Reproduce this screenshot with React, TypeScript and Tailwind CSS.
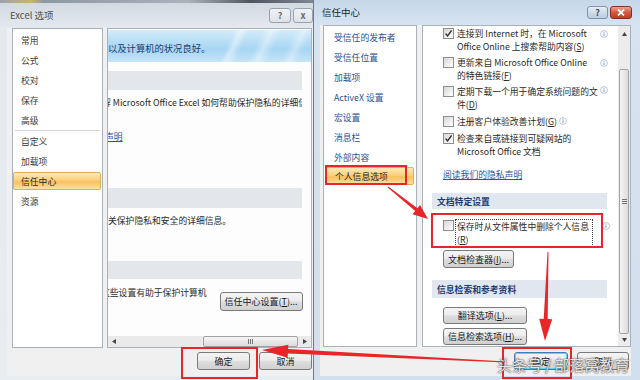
import React from "react";

const font = "font-['Noto_Sans_CJK_SC','Noto_Sans',sans-serif]";

function Check({ checked }: { checked?: boolean }) {
  return (
    <span className="mt-[1px] flex h-[11px] w-[11px] shrink-0 items-center justify-center border border-[#8f8f8f] bg-[linear-gradient(135deg,#d6d6d6,#ffffff)]">
      {checked && (
        <svg width="9" height="9" viewBox="0 0 9 9">
          <path d="M1.6 4.6 L3.6 6.9 L7.6 1.4" stroke="#2b2b2b" strokeWidth="1.4" fill="none" />
        </svg>
      )}
    </span>
  );
}

function Info({ className = "" }: { className?: string }) {
  return (
    <svg className={className} width="8" height="8" viewBox="0 0 10 10">
      <circle cx="5" cy="5" r="4.3" fill="#ffffff" stroke="#9fb1c9" strokeWidth="0.9" />
      <rect x="4.4" y="4.3" width="1.2" height="3.3" fill="#7c93b6" />
      <rect x="4.4" y="2.2" width="1.2" height="1.2" fill="#7c93b6" />
    </svg>
  );
}

function Btn({
  className = "",
  children,
  focused,
}: {
  className?: string;
  children: React.ReactNode;
  focused?: boolean;
}) {
  const border = focused
    ? "border-[#3c7fb1] shadow-[inset_0_0_0_1px_#5fd4f4]"
    : "border-[#7a7a7a]";
  return (
    <div
      className={`flex shrink-0 items-center justify-center rounded-[3px] border ${border} bg-[linear-gradient(#f4f4f4_0%,#ececec_45%,#dedede_52%,#d0d0d0_100%)] text-[9px] leading-none text-[#1a1a1a] ${className}`}
    >
      {children}
    </div>
  );
}

function arrowPts(
  tx: number,
  ty: number,
  hx: number,
  hy: number,
  tailW: number,
  shaftW: number,
  headLen: number,
  headW: number
) {
  const dx = hx - tx;
  const dy = hy - ty;
  const L = Math.hypot(dx, dy);
  const ux = dx / L;
  const uy = dy / L;
  const nx = -uy;
  const ny = ux;
  const bx = hx - ux * headLen;
  const by = hy - uy * headLen;
  const p = [
    [tx + (nx * tailW) / 2, ty + (ny * tailW) / 2],
    [bx + (nx * shaftW) / 2, by + (ny * shaftW) / 2],
    [bx + (nx * headW) / 2, by + (ny * headW) / 2],
    [hx, hy],
    [bx - (nx * headW) / 2, by - (ny * headW) / 2],
    [bx - (nx * shaftW) / 2, by - (ny * shaftW) / 2],
    [tx - (nx * tailW) / 2, ty - (ny * tailW) / 2],
  ];
  return p.map((q) => q.map((v) => v.toFixed(1)).join(",")).join(" ");
}

function LeftWindow() {
  const items1 = ["常用", "公式", "校对", "保存", "高级"];
  const items2 = ["自定义", "加载项", "信任中心", "资源"];
  return (
    <div className="flex h-[380px] w-[314px] shrink-0 flex-col border-r border-[#6f7a87] bg-[linear-gradient(#cfd7e0,#e4e9ef_28px,#e8edf2)]">
      <div className="h-[3px] shrink-0 bg-[linear-gradient(90deg,#9aa3ad,#c9b26a_10%,#8e98a3_14%,#aab3bc_60%,#4e5660_80%,#7d8792)]" />
      <div className="flex h-[25px] shrink-0 items-center pl-[10px]">
        <span className="text-[9.5px] text-[#505050]">Excel 选项</span>
        <div className="ml-auto flex gap-[2px]">
          <div className="flex h-[15px] w-[22px] items-center justify-center rounded-[3px] border border-[#98a3af] bg-[linear-gradient(#f1f3f6,#dde2e8)] text-[9px] font-bold text-[#6a6a6a]">
            ?
          </div>
          <div className="flex h-[15px] w-[20px] items-center justify-center rounded-[3px] border border-[#98a3af] bg-[linear-gradient(#f1f3f6,#dde2e8)] text-[9px] font-bold text-[#6a6a6a]">
            x
          </div>
        </div>
      </div>
      <div className="mb-[4px] ml-[7px] flex flex-1 flex-col bg-[#f0f0f0] pl-[5px] text-[8.8px] leading-[13px]">
        <div className="flex h-[320px] gap-[4px]">
          <div className="flex h-[320px] w-[91px] shrink-0 flex-col border border-[#a9b1bb] bg-white pt-[1px]">
            {items1.map((t) => (
              <div key={t} className="flex h-[20px] items-center pl-[8px] text-[#3a3a3a]">
                {t}
              </div>
            ))}
            <div className="mx-[2px] h-px bg-[#d6d6d6]" />
            {items2.map((t) =>
              t === "信任中心" ? (
                <div key={t} className="flex h-[20px] items-start">
                  <div className="mt-[1px] flex h-[18px] w-[88px] items-center rounded-[2px] border border-[#e0ae55] bg-[linear-gradient(#fdeab8,#fbd07a_45%,#f9c15d_55%,#fde2a0)] pl-[7px] text-[#2a2a2a]">
                    {t}
                  </div>
                </div>
              ) : (
                <div key={t} className="flex h-[20px] items-center pl-[8px] text-[#3a3a3a]">
                  {t}
                </div>
              )
            )}
          </div>
          <div className="flex h-[320px] w-[205px] shrink-0 flex-col border border-[#a9b1bb] bg-[#fdfdfd]">
            <div className="flex flex-1 flex-col overflow-hidden">
              <div className="mt-[1px] flex h-[32px] shrink-0 items-center bg-[linear-gradient(115deg,transparent_58%,rgba(255,255,255,0.45)_61%,transparent_65%,transparent_71%,rgba(255,255,255,0.4)_75%,transparent_80%,transparent_86%,rgba(255,255,255,0.35)_90%,transparent_94%),linear-gradient(180deg,#d3ebfa,#a6d5f2_60%,#c6e4f7)] pt-[4px]">
                <span className="whitespace-nowrap text-[9.3px] text-[#1d3d70]">以及计算机的状况良好。</span>
              </div>
              <div className="mt-[9px] h-[19px] w-[194px] shrink-0 bg-[#e3e7ec]" />
              <div className="mt-[6px] w-[194px] overflow-hidden whitespace-nowrap text-[#2a2a2a]">
                <span className="-ml-[6px] inline-block">解 Microsoft Office Excel 如何帮助保护隐私的详细信息</span>
              </div>
              <div className="mt-[21px] whitespace-nowrap">
                <span className="-ml-[3px] inline-block text-[#2b54a6] underline">声明</span>
              </div>
              <div className="mt-[45px] h-[20px] w-[194px] shrink-0 bg-[#e3e7ec]" />
              <div className="mt-[6px] whitespace-nowrap text-[#2a2a2a]">关保护隐私和安全的详细信息。</div>
              <div className="mt-[34px] h-[18px] w-[194px] shrink-0 bg-[#e3e7ec]" />
              <div className="mt-[7px] flex items-start">
                <span className="-ml-[7px] whitespace-nowrap text-[#2a2a2a]">这些设置有助于保护计算机</span>
                <Btn className="ml-[13px] mt-[6px] h-[19px] w-[83px]">
                  信任中心设置(<u>T</u>)...
                </Btn>
              </div>
            </div>
            <div className="flex h-[11px] shrink-0 bg-[#eaeaea]">
              <div className="flex w-[12px] items-center justify-center">
                <svg width="4" height="5" viewBox="0 0 4 5">
                  <path d="M4 0 L0 2.5 L4 5 Z" fill="#444" />
                </svg>
              </div>
              <div className="flex flex-1 justify-end pr-[1px]">
                <div className="flex h-[11px] w-[95px] items-center justify-center rounded-[2px] border border-[#a2a2a2] bg-[linear-gradient(#f5f5f5,#dcdcdc)]">
                  <svg width="6" height="5" viewBox="0 0 6 5">
                    <path d="M0.5 0 V5 M2.5 0 V5 M4.5 0 V5" stroke="#555" strokeWidth="0.8" />
                  </svg>
                </div>
              </div>
              <div className="flex w-[12px] items-center justify-center">
                <svg width="4" height="5" viewBox="0 0 4 5">
                  <path d="M0 0 L4 2.5 L0 5 Z" fill="#444" />
                </svg>
              </div>
            </div>
          </div>
        </div>
        <div className="mt-[4px] flex justify-end gap-[9px] pr-[1px]">
          <Btn className="h-[18px] w-[53px]">确定</Btn>
          <Btn className="h-[18px] w-[53px]">取消</Btn>
        </div>
      </div>
    </div>
  );
}

function RightWindow() {
  const nav = ["受信任的发布者", "受信任位置", "加载项", "ActiveX 设置", "宏设置", "消息栏", "外部内容"];
  return (
    <div className="flex h-[380px] flex-1 flex-col bg-[linear-gradient(#c6d7ea,#d6e3f1_25px,#d1dfee)]">
      <div className="flex h-[25px] shrink-0 items-center pl-[8px] pr-[8px]">
        <span className="text-[9.5px] text-[#1e1e1e]">信任中心</span>
        <div className="ml-auto flex gap-[2px]">
          <div className="flex h-[13px] w-[21px] items-center justify-center rounded-[3px] border border-[#7f93ab] bg-[linear-gradient(#e6eef7,#b9cbe0)] text-[9px] font-bold text-[#3d4e66]">
            ?
          </div>
          <div className="flex h-[13px] w-[22px] items-center justify-center rounded-[3px] border border-[#8a2e22] bg-[linear-gradient(#e9a48f,#d35a40_50%,#c23b22)]">
            <svg width="8" height="7" viewBox="0 0 8 7">
              <path d="M1 0.5 L7 6.5 M7 0.5 L1 6.5" stroke="#ffffff" strokeWidth="1.8" />
            </svg>
          </div>
        </div>
      </div>
      <div className="mb-[4px] ml-[6px] mr-[9px] flex flex-1 flex-col bg-[#f0f0f0] pl-[3px] text-[8.8px] leading-[13px]">
        <div className="flex h-[322px] gap-[5px]">
          <div className="flex h-[322px] w-[94px] shrink-0 flex-col border border-[#a9b1bb] bg-white pt-[1px]">
            {nav.map((t) => (
              <div key={t} className="flex h-[20px] items-center whitespace-nowrap pl-[10px] text-[#2c4f94]">
                {t}
              </div>
            ))}
            <div className="flex h-[20px] items-start">
              <div className="ml-[1px] flex h-[18px] w-[89px] items-center rounded-[2px] border border-[#e0ae55] bg-[linear-gradient(#fdeab8,#fbd07a_45%,#f9c15d_55%,#fde2a0)] pl-[9px] text-[#2a2a2a]">
                个人信息选项
              </div>
            </div>
          </div>
          <div className="flex h-[322px] w-[209px] shrink-0 border border-[#a9b1bb] bg-white">
            <div className="flex flex-1 flex-col overflow-hidden pl-[20px] pt-[1px] text-[#2a2a2a]">
              <div className="flex items-start">
                <Check checked />
                <div className="ml-[3px] w-[141px] whitespace-nowrap">
                  连接到 Internet 时，在 Microsoft
                  <br />
                  Office Online 上搜索帮助内容(<u>S</u>)
                </div>
                <Info className="ml-[2px] mt-[3px] shrink-0" />
              </div>
              <div className="mt-[3px] flex items-start">
                <Check />
                <div className="ml-[3px] w-[141px] whitespace-nowrap">
                  更新来自 Microsoft Office Online
                  <br />
                  的特色链接(<u>F</u>)
                </div>
                <Info className="ml-[2px] mt-[3px] shrink-0" />
              </div>
              <div className="mt-[3px] flex items-start">
                <Check />
                <div className="ml-[3px] w-[141px] whitespace-nowrap">
                  定期下载一个用于确定系统问题的文
                  <br />
                  件(<u>D</u>)
                </div>
                <Info className="ml-[2px] mt-[1px] shrink-0" />
              </div>
              <div className="mt-[4px] flex items-start">
                <Check />
                <div className="ml-[3px] whitespace-nowrap">
                  注册客户体验改善计划(<u>G</u>)
                </div>
                <Info className="ml-[2px] mt-[2px] shrink-0" />
              </div>
              <div className="mt-[4px] flex items-start">
                <Check checked />
                <div className="ml-[3px] whitespace-nowrap">
                  检查来自或链接到可疑网站的
                  <br />
                  Microsoft Office 文档
                </div>
              </div>
              <div className="mt-[10px] whitespace-nowrap text-[#2b54a6] underline">阅读我们的隐私声明</div>
              <div className="-ml-[11px] mt-[12px] flex h-[16px] w-[175px] shrink-0 items-center bg-[#e1e7ef] pl-[5px] font-bold text-[#1e3c72]">
                文档特定设置
              </div>
              <div className="mt-[10px] flex items-start">
                <Check />
                <div className="ml-[1px] w-[138px] whitespace-nowrap border border-dotted border-[#444] pl-[1px]">
                  保存时从文件属性中删除个人信息
                  <br />
                  (<u>R</u>)
                </div>
                <Info className="ml-[9px] mt-[3px] shrink-0" />
              </div>
              <Btn className="mt-[3px] h-[18px] w-[71px]">
                文档检查器(<u>I</u>)...
              </Btn>
              <div className="-ml-[11px] mt-[12px] flex h-[18px] w-[175px] shrink-0 items-center bg-[#e1e7ef] pl-[5px] font-bold text-[#1e3c72]">
                信息检索和参考资料
              </div>
              <Btn className="mt-[9px] h-[17px] w-[84px]">
                翻译选项(<u>L</u>)...
              </Btn>
              <Btn className="mt-[4px] h-[17px] w-[84px]">
                信息检索选项(<u>H</u>)...
              </Btn>
            </div>
            <div className="flex w-[12px] shrink-0 flex-col bg-[#ececec]">
              <div className="flex h-[15px] items-center justify-center">
                <svg width="5" height="4" viewBox="0 0 5 4">
                  <path d="M0 4 L2.5 0 L5 4 Z" fill="#444" />
                </svg>
              </div>
              <div className="h-[28px]" />
              <div className="mx-[1px] flex h-[265px] items-center justify-center rounded-[2px] border border-[#a2a2a2] bg-[linear-gradient(90deg,#f5f5f5,#dcdcdc)]">
                <svg width="5" height="6" viewBox="0 0 5 6">
                  <path d="M0 0.5 H5 M0 2.5 H5 M0 4.5 H5" stroke="#555" strokeWidth="0.8" />
                </svg>
              </div>
              <div className="flex h-[12px] items-center justify-center">
                <svg width="5" height="4" viewBox="0 0 5 4">
                  <path d="M0 0 L5 0 L2.5 4 Z" fill="#444" />
                </svg>
              </div>
            </div>
          </div>
        </div>
        <div className="mt-[5px] flex justify-end gap-[9px] pr-[2px]">
          <Btn focused className="h-[18px] w-[54px]">
            确定
          </Btn>
          <Btn className="h-[18px] w-[52px]">取消</Btn>
        </div>
      </div>
    </div>
  );
}

export default function App() {
  return (
    <div className={`relative flex h-[380px] w-[640px] overflow-hidden bg-[#5b6878] ${font}`}>
      <LeftWindow />
      <RightWindow />
      <div className="pointer-events-none absolute left-[181px] top-[347px] h-[32px] w-[77px] border-2 border-[#e8262a]" />
      <div className="pointer-events-none absolute left-[325px] top-[165px] h-[20px] w-[82px] border-2 border-[#e8262a]" />
      <div className="pointer-events-none absolute left-[431px] top-[213px] h-[35px] w-[172px] border-2 border-[#e8262a]" />
      <div className="pointer-events-none absolute left-[502px] top-[347px] h-[32px] w-[70px] border-2 border-[#e8262a]" />
      <svg className="pointer-events-none absolute left-0 top-0" width="640" height="380" viewBox="0 0 640 380">
        <polygon fill="#e8262a" points={arrowPts(506, 362, 262, 350, 1, 4.5, 26, 13)} />
        <polygon fill="#e8262a" points={arrowPts(388, 187, 428, 219, 1, 3.5, 15, 12)} />
        <polygon fill="#e8262a" points={arrowPts(548, 252, 545, 341, 1, 4, 22, 13)} />
      </svg>
      <div className="pointer-events-none absolute left-[497px] top-[357px] whitespace-nowrap text-[15px] leading-none text-white/85 [text-shadow:0_0_2px_#444,0_0_1px_#444]">
        头条号 / 部落窝教育
      </div>
    </div>
  );
}
